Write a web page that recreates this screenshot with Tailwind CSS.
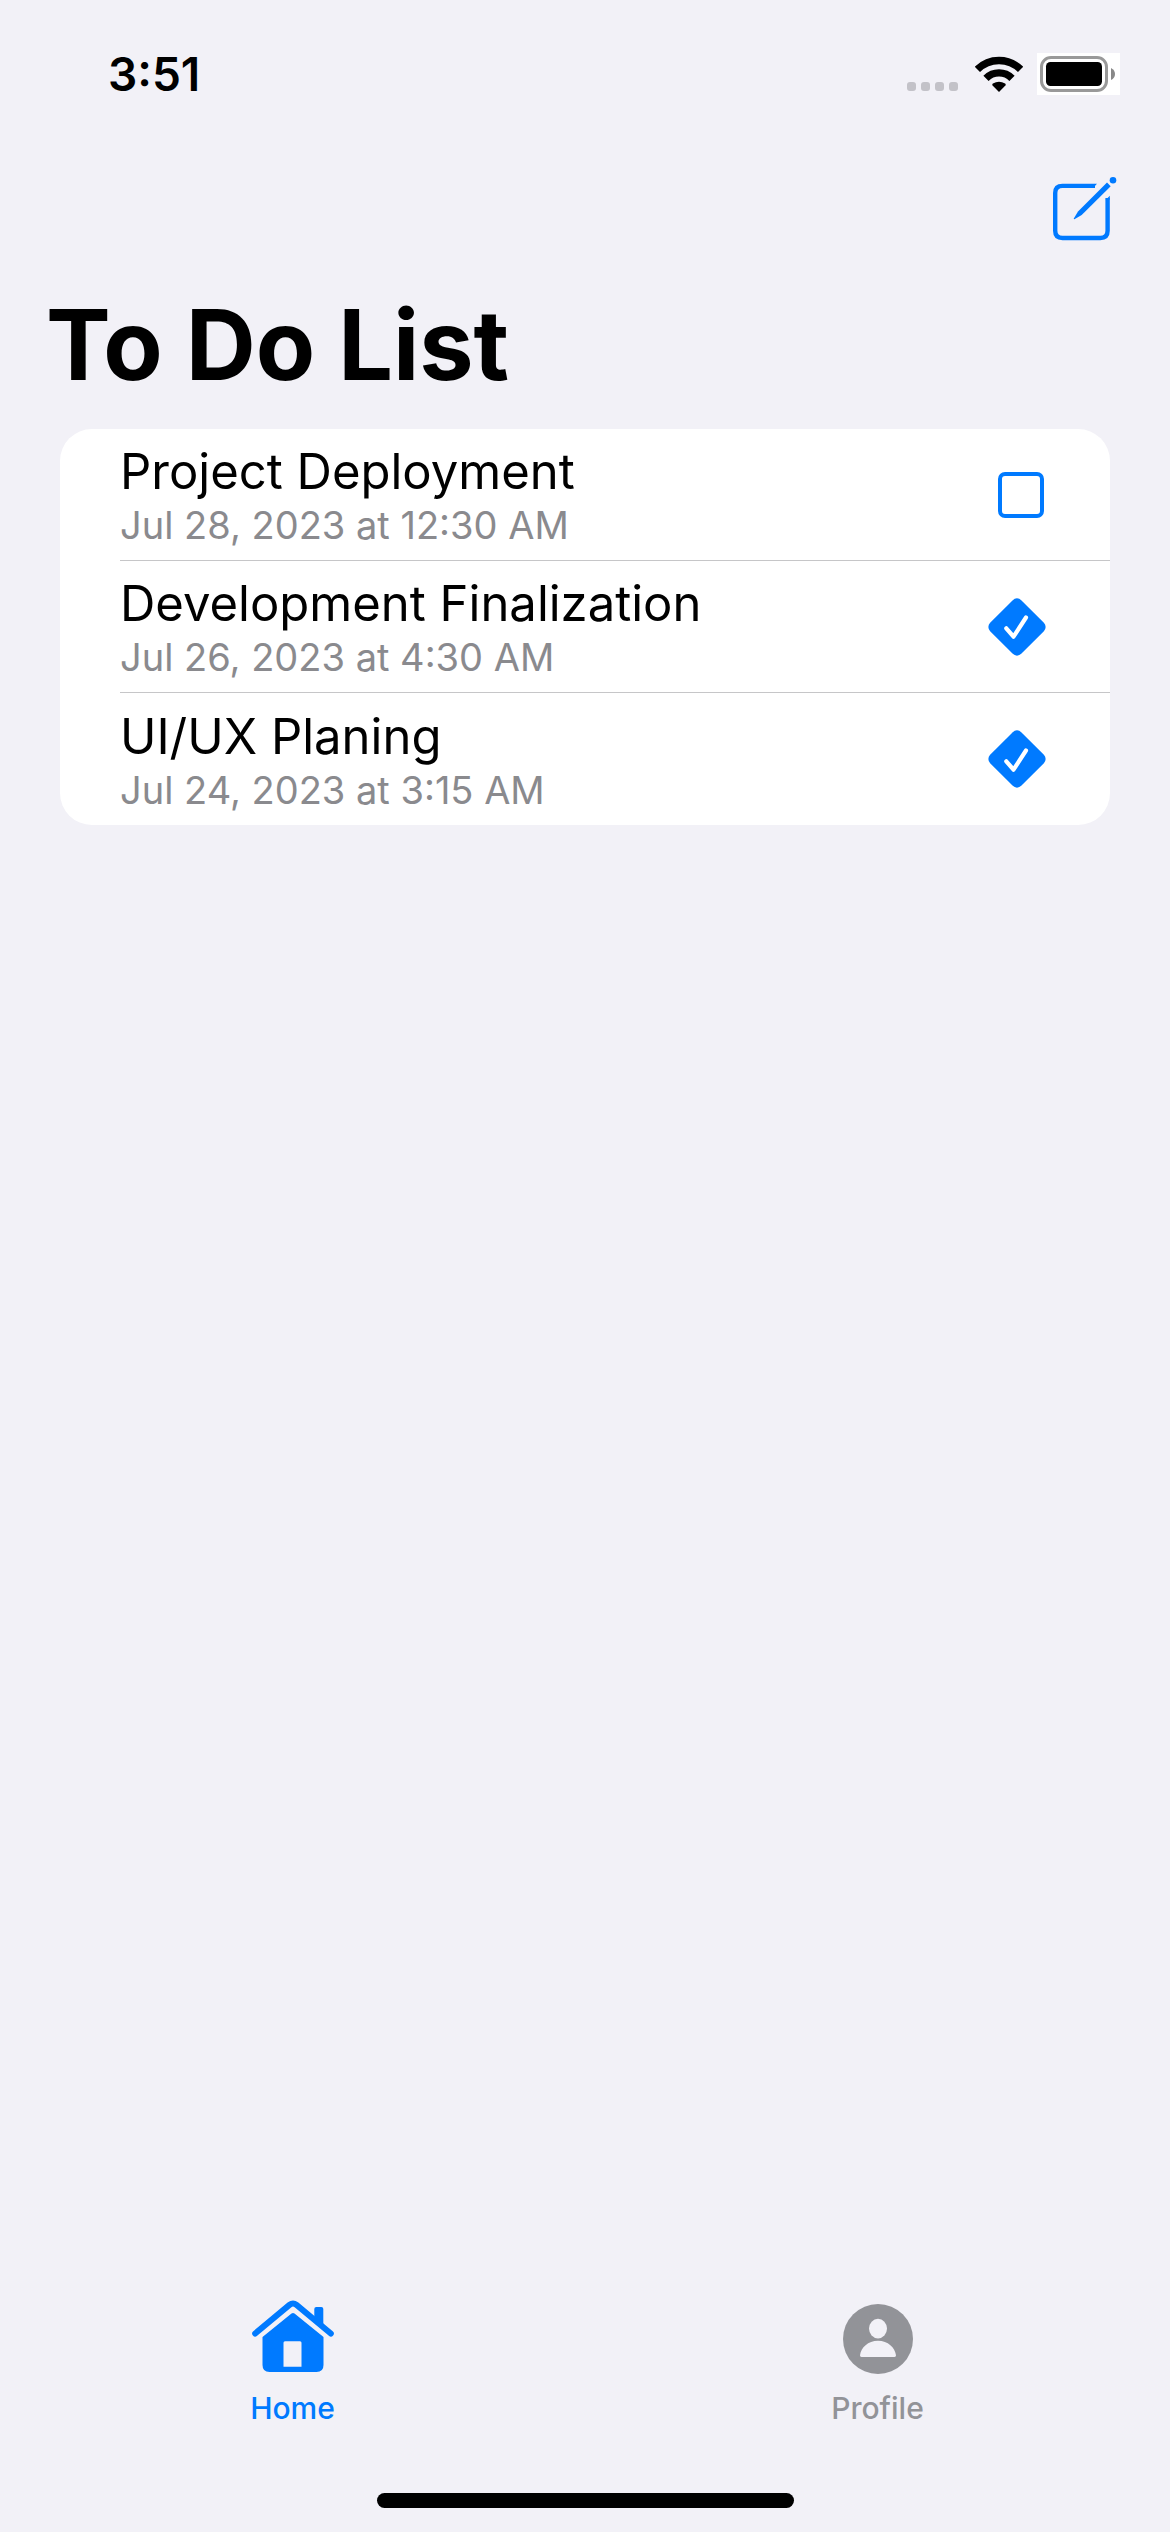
<!DOCTYPE html>
<html lang="en">
<head>
<meta charset="utf-8">
<meta name="viewport" content="width=device-width, initial-scale=1">
<title>To Do List</title>
<script src="https://cdn.jsdelivr.net/npm/@tailwindcss/browser@4"></script>
</head>
<body class="flex min-h-screen flex-col bg-[#f2f1f7] font-['Inter',sans-serif] text-black">

  <!-- Status bar -->
  <div class="flex h-[148px] items-center justify-between pr-[50px] pl-[108px]">
    <time class="text-[46px] leading-none font-semibold">3:51</time>
    <div class="flex items-center">
      <svg class="mt-[25px] h-[9px] w-[51px]" viewBox="0 0 51 9" fill="#c3c2c8" aria-hidden="true">
        <rect width="9" height="9" rx="3"/><rect x="14" width="9" height="9" rx="3"/><rect x="28" width="9" height="9" rx="3"/><rect x="42" width="9" height="9" rx="3"/>
      </svg>
      <svg class="ml-[17px] h-[36px] w-[48px]" viewBox="0 0 48 36" fill="none" stroke="#000" stroke-width="7.4" aria-hidden="true">
        <path d="M2.4 13.4a30.6 30.6 0 0 1 43.2 0"/>
        <path d="M11 22.3a18.4 18.4 0 0 1 26 0"/>
        <path d="M24 36l-6.4-6.6q-.9-1 .3-1.8a11.500 11.500 0 0 1 12.200 0q1.200.800.300 1.800z" fill="#000" stroke="none"/>
      </svg>
      <svg class="ml-[14px] h-[42px] w-[83px] bg-white" viewBox="0 0 83 42" aria-hidden="true">
        <rect x="4.500" y="4.500" width="65" height="33" rx="9.500" fill="none" stroke="#999" stroke-width="3"/>
        <rect x="9" y="9" width="56" height="24" rx="4.500"/>
        <path d="M74 15q4 2 4 6t-4 6z" fill="#888"/>
      </svg>
    </div>
  </div>

  <header class="flex flex-col pr-[50px] pl-[46px]">
    <button type="button" aria-label="New item" class="mt-[28px] self-end">
      <svg class="h-[66px] w-[67px]" viewBox="0 0 67 66" fill="none" stroke="#007aff" stroke-width="4.400">
        <path d="M42 9.900H9.500Q2.200 9.900 2.200 17v37.800q0 7.200 7.300 7.200h37.800q7.300 0 7.300-7.200V22"/>
        <path d="M42 7.700h2l-3.900 4.400H39zM56.800 19.800v4h-4.400v.5z" fill="#007aff" stroke="none"/>
        <path d="M54 6.500l3.700 3.700-29 28.800L21.400 43.200q-.9.100-.600-.8L25 35.400z" fill="#007aff" stroke="none"/>
        <circle cx="60" cy="4.300" r="3.300" fill="#007aff" stroke="none"/>
      </svg>
    </button>
    <h1 class="mt-[43px] text-[97px] leading-[120px] font-bold">To Do List</h1>
  </header>

  <main class="mt-[24px] grow px-[60px]">
    <ul class="rounded-[32px] bg-white pl-[60px]">
      <li class="flex h-[132px] items-center justify-between border-b border-[#c6c6c8] pr-[66px]">
        <label for="t1" class="flex flex-col pt-[3px]">
          <span class="text-[49px] leading-[58px]">Project Deployment</span>
          <span class="text-[38px] leading-[48px] text-[#8a8a8e]">Jul 28, 2023 at 12:30 AM</span>
        </label>
        <input id="t1" type="checkbox" class="size-[46px] appearance-none rounded-[7px] border-4 border-[#007aff]">
      </li>
      <li class="flex h-[132px] items-center justify-between border-b border-[#c6c6c8] pr-[65px]">
        <label for="t2" class="flex flex-col pt-[3px]">
          <span class="text-[49px] leading-[58px]">Development Finalization</span>
          <span class="text-[38px] leading-[48px] text-[#8a8a8e]">Jul 26, 2023 at 4:30 AM</span>
        </label>
        <div class="grid size-[57px] place-items-center">
          <input id="t2" type="checkbox" checked class="col-start-1 row-start-1 size-[44px] rotate-45 appearance-none rounded-[6px] bg-[#007aff]">
          <svg class="pointer-events-none z-10 col-start-1 row-start-1 size-[57px]" viewBox="0 0 57 57" fill="none" stroke="#fff" stroke-width="4.200" stroke-linecap="round" stroke-linejoin="round" aria-hidden="true"><path d="M18.300 30.300l7.200 8.400L38 19.500"/></svg>
        </div>
      </li>
      <li class="flex h-[132px] items-center justify-between pr-[65px]">
        <label for="t3" class="flex flex-col pt-[3px]">
          <span class="text-[49px] leading-[58px]">UI/UX Planing</span>
          <span class="text-[38px] leading-[48px] text-[#8a8a8e]">Jul 24, 2023 at 3:15 AM</span>
        </label>
        <div class="grid size-[57px] place-items-center">
          <input id="t3" type="checkbox" checked class="col-start-1 row-start-1 size-[44px] rotate-45 appearance-none rounded-[6px] bg-[#007aff]">
          <svg class="pointer-events-none z-10 col-start-1 row-start-1 size-[57px]" viewBox="0 0 57 57" fill="none" stroke="#fff" stroke-width="4.200" stroke-linecap="round" stroke-linejoin="round" aria-hidden="true"><path d="M18.300 30.300l7.200 8.400L38 19.500"/></svg>
        </div>
      </li>
    </ul>
  </main>

  <!-- Tab bar -->
  <nav class="grid grid-cols-2 text-[30px] leading-[36px] font-medium">
    <a href="#home" aria-current="page" class="flex flex-col items-center gap-[16px] text-[#007aff]">
      <svg class="h-[74px] w-[82px]" viewBox="0 0 82 74" fill="currentColor" aria-hidden="true">
        <path d="M3.200 33.500L37.500 4.900q3.500-2.800 7 0L78.800 33.500" fill="none" stroke="currentColor" stroke-width="6" stroke-linecap="round"/>
        <path d="M62.300 20V9q0-2 2-2h5q2 0 2 2v18z"/>
        <path fill-rule="evenodd" d="M10.500 37L39.500 13.500q1.500-1.200 3 0L71.500 37v28q0 7-7 7h-47q-7 0-7-7zM33 41.300q-1.500 0-1.500 1.500v24h18v-24q0-1.500-1.500-1.500z"/>
      </svg>
      <span>Home</span>
    </a>
    <a href="#profile" class="flex flex-col items-center gap-[16px] text-[#929398]">
      <svg class="mt-[4px] size-[70px]" viewBox="0 0 70 70" fill="#f2f1f7" aria-hidden="true">
        <circle cx="35" cy="35" r="35" fill="currentColor"/>
        <ellipse cx="35" cy="24.600" rx="9" ry="9.800"/>
        <path d="M18.500 53q-1.600 0-1.500-1.700C18 43.500 25 36.700 35 36.700s17 6.800 18 14.600q.1 1.700-1.500 1.700z"/>
      </svg>
      <span>Profile</span>
    </a>
  </nav>
  <div class="mx-auto mt-[67px] mb-[24px] h-[15px] w-[417px] rounded-full bg-black"></div>
</body>
</html>
